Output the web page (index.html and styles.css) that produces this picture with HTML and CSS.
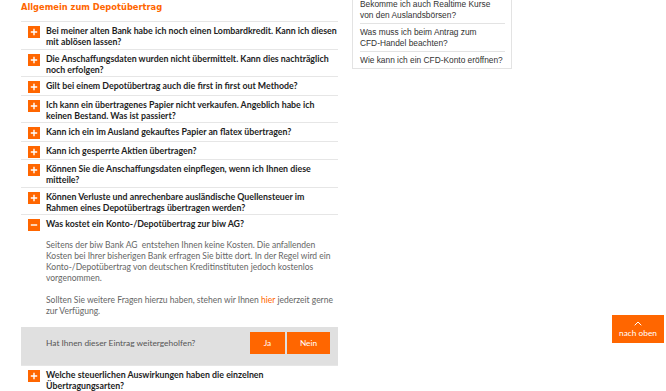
FILE: index.html
```html
<!DOCTYPE html>
<html lang="de">
<head>
<meta charset="utf-8">
<title>FAQ Depotübertrag</title>
<link rel="stylesheet" href="styles.css">
</head>
<body>
<div class="page">
  <main class="main">
    <h2 class="section-title">Allgemein zum Depotübertrag</h2>
    <ul class="faq">
      <li class="item"><span class="ico"><svg width="12" height="12" viewBox="0 0 12 12"><rect width="12" height="12" fill="#ff6600"/><path d="M6 2.8v6.4M2.8 6h6.4" stroke="#fff" stroke-width="1.4"/></svg></span><span class="q">Bei meiner alten Bank habe ich noch einen Lombardkredit. Kann ich diesen mit ablösen lassen?</span></li>
      <li class="item"><span class="ico"><svg width="12" height="12" viewBox="0 0 12 12"><rect width="12" height="12" fill="#ff6600"/><path d="M6 2.8v6.4M2.8 6h6.4" stroke="#fff" stroke-width="1.4"/></svg></span><span class="q">Die Anschaffungsdaten wurden nicht übermittelt. Kann dies nachträglich noch erfolgen?</span></li>
      <li class="item"><span class="ico"><svg width="12" height="12" viewBox="0 0 12 12"><rect width="12" height="12" fill="#ff6600"/><path d="M6 2.8v6.4M2.8 6h6.4" stroke="#fff" stroke-width="1.4"/></svg></span><span class="q">Gilt bei einem Depotübertrag auch die first in first out Methode?</span></li>
      <li class="item"><span class="ico"><svg width="12" height="12" viewBox="0 0 12 12"><rect width="12" height="12" fill="#ff6600"/><path d="M6 2.8v6.4M2.8 6h6.4" stroke="#fff" stroke-width="1.4"/></svg></span><span class="q">Ich kann ein übertragenes Papier nicht verkaufen. Angeblich habe ich keinen Bestand. Was ist passiert?</span></li>
      <li class="item"><span class="ico"><svg width="12" height="12" viewBox="0 0 12 12"><rect width="12" height="12" fill="#ff6600"/><path d="M6 2.8v6.4M2.8 6h6.4" stroke="#fff" stroke-width="1.4"/></svg></span><span class="q">Kann ich ein im Ausland gekauftes Papier an flatex übertragen?</span></li>
      <li class="item"><span class="ico"><svg width="12" height="12" viewBox="0 0 12 12"><rect width="12" height="12" fill="#ff6600"/><path d="M6 2.8v6.4M2.8 6h6.4" stroke="#fff" stroke-width="1.4"/></svg></span><span class="q">Kann ich gesperrte Aktien übertragen?</span></li>
      <li class="item"><span class="ico"><svg width="12" height="12" viewBox="0 0 12 12"><rect width="12" height="12" fill="#ff6600"/><path d="M6 2.8v6.4M2.8 6h6.4" stroke="#fff" stroke-width="1.4"/></svg></span><span class="q">Können Sie die Anschaffungsdaten einpflegen, wenn ich Ihnen diese mitteile?</span></li>
      <li class="item"><span class="ico"><svg width="12" height="12" viewBox="0 0 12 12"><rect width="12" height="12" fill="#ff6600"/><path d="M6 2.8v6.4M2.8 6h6.4" stroke="#fff" stroke-width="1.4"/></svg></span><span class="q">Können Verluste und anrechenbare ausländische Quellensteuer im Rahmen eines Depotübertrags übertragen werden?</span></li>
      <li class="item open">
        <div class="head"><span class="ico"><svg width="12" height="12" viewBox="0 0 12 12"><rect width="12" height="12" fill="#ff6600"/><path d="M2.8 6h6.4" stroke="#fff" stroke-width="1.4"/></svg></span><span class="q">Was kostet ein Konto-/Depotübertrag zur biw AG?</span></div>
        <div class="answer">
          <p>Seitens der biw Bank AG &nbsp;entstehen Ihnen keine Kosten. Die anfallenden Kosten bei Ihrer bisherigen Bank erfragen Sie bitte dort. In der Regel wird ein Konto-/Depotübertrag von deutschen Kreditinstituten jedoch kostenlos vorgenommen.</p>
          <p>Sollten Sie weitere Fragen hierzu haben, stehen wir Ihnen <a href="#" class="link">hier</a> jederzeit gerne zur Verfügung.</p>
        </div>
        <div class="feedback">
          <span class="fb-text">Hat Ihnen dieser Eintrag weitergeholfen?</span>
          <div class="fb-buttons">
            <button class="btn btn-ja">Ja</button>
            <button class="btn btn-nein">Nein</button>
          </div>
        </div>
      </li>
      <li class="item"><span class="ico"><svg width="12" height="12" viewBox="0 0 12 12"><rect width="12" height="12" fill="#ff6600"/><path d="M6 2.8v6.4M2.8 6h6.4" stroke="#fff" stroke-width="1.4"/></svg></span><span class="q">Welche steuerlichen Auswirkungen haben die einzelnen Übertragungsarten?</span></li>
    </ul>
  </main>
  <aside class="side">
    <ul class="side-list">
      <li>Bekomme ich auch Realtime Kurse von den Auslandsbörsen?</li>
      <li>Was muss ich beim Antrag zum <span class="nowrap">CFD-Handel</span> beachten?</li>
      <li>Wie kann ich ein <span class="nowrap">CFD-Konto</span> eröffnen?</li>
    </ul>
  </aside>
</div>
<a href="#" class="to-top">
  <svg width="8" height="5" viewBox="0 0 8 5"><path d="M0.7 4.3L4 1L7.3 4.3" fill="none" stroke="#fff" stroke-width="1"/></svg>
  <span>nach oben</span>
</a>
</body>
</html>
```

FILE: styles.css
```css
* { box-sizing: border-box; }
html, body { margin: 0; padding: 0; background: #fff; }
body {
  font-family: Lato, "Liberation Sans", sans-serif;
  color: #222;
  overflow: hidden;
}
.page {
  display: flex;
  align-items: flex-start;
  gap: 14px;
  padding-left: 21px;
}
.main { width: 317px; flex: none; }
.section-title {
  margin: 2px 0 0;
  font-family: "DejaVu Sans", Lato, sans-serif;
  font-size: 8.3px;
  line-height: 11px;
  font-weight: 700;
  color: #ff6600;
  height: 19px;
}
.faq { list-style: none; margin: 0; padding: 0; }
.item {
  border-top: 1px solid #e6e6e6;
  padding: 3px 0 1.5px 7px;
  display: flex;
  gap: 6px;
  align-items: flex-start;
}
.ico { flex: none; width: 12px; height: 12px; margin-top: 1px; display: block; }
.ico svg { display: block; }
.q {
  font-size: 8.8px;
  line-height: 11px;
  font-weight: 700;
  color: #1e1e1e;
}
.item.open { display: block; padding: 0; }
.head {
  display: flex;
  gap: 6px;
  align-items: flex-start;
  padding: 3px 0 1.5px 7px;
}
.answer {
  padding: 7px 2px 0 25px;
  font-size: 8.5px;
  line-height: 11px;
  color: #666;
}
.answer p { margin: 0 0 11px; }
.answer p:last-child { margin-bottom: 0; }
.link { color: #ff6600; text-decoration: none; }
.feedback {
  margin-top: 10px;
  background: #e0e0e0;
  display: flex;
  align-items: center;
  justify-content: space-between;
  padding: 5px 8px 11px 25px;
}
.fb-text { font-size: 8.4px; color: #555; }
.fb-buttons { display: flex; gap: 2px; }
.btn {
  border: 0;
  background: #ff6600;
  color: #fff;
  font-family: Lato, "Liberation Sans", sans-serif;
  font-size: 8.3px;
  height: 22px;
  padding: 0;
  margin: 0;
}
.btn-ja { width: 35px; }
.btn-nein { width: 43px; }
.side {
  width: 160px;
  flex: none;
  margin-top: -10px;
  border: 1px solid #e3e3e3;
  padding: 0 6.5px 0 7px;
  font-family: "Liberation Sans", Arial, sans-serif;
}
.side-list { list-style: none; margin: 0; padding: 0; }
.side-list li {
  font-size: 8.35px;
  line-height: 11px;
  color: #333;
  padding: 3px 0 2px;
  border-top: 1px solid #e3e3e3;
}
.side-list li:first-child { border-top: 0; padding-top: 8px; }
.side-list li:last-child { padding-bottom: 2px; }
.nowrap { white-space: nowrap; }
.to-top {
  position: fixed;
  left: 612px;
  top: 315px;
  width: 52px;
  height: 28px;
  background: #ff6600;
  color: #fff;
  text-decoration: none;
  display: flex;
  flex-direction: column;
  align-items: center;
  justify-content: center;
  gap: 3px;
  font-family: Lato, "Liberation Sans", sans-serif;
  font-size: 8.3px;
  line-height: 9px;
}
.to-top svg { display: block; }
```
